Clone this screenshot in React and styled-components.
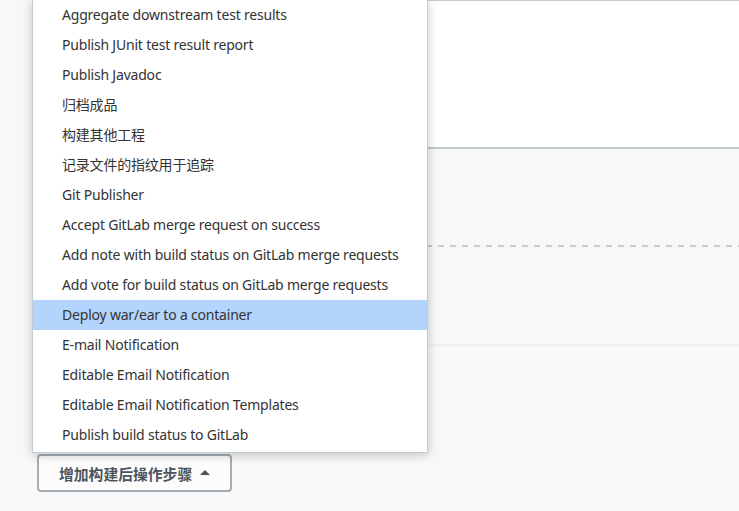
import React from 'react';
import styled, { createGlobalStyle } from 'styled-components';

const GlobalStyle = createGlobalStyle`
  html, body {
    margin: 0;
    padding: 0;
    background: #f8f8f8;
  }
  body {
    width: 739px;
    height: 511px;
    overflow: hidden;
    font-family: "Noto Sans", "Noto Sans CJK SC", sans-serif;
  }
  *{
    box-sizing: border-box;
  }
`;

const Page = styled.div`
  display: flex;
  flex-direction: column;
  width: 739px;
  height: 511px;
  background: #f8f8f8;
`;

const TopPanel = styled.div`
  height: 149px;
  margin-left: 40px;
  background: #fff;
  border-top: 1px solid #c3ccd1;
  border-bottom: 2px solid #c3ccd1;
`;

const Section = styled.div`
  display: flex;
  flex-direction: column;
  margin-left: 40px;
  padding-top: 96px;
`;

const DashedRule = styled.div`
  height: 2px;
  background-image: linear-gradient(to right, #c3ccd1 0 6px, transparent 6px 12px);
  background-size: 12px 2px;
  background-position: 2px 0;
`;

const FaintRule = styled.div`
  height: 2px;
  margin-top: 97px;
  background: #efefef;
`;

const Footer = styled.div`
  padding: 108px 0 0 37px;
`;

const DropWrap = styled.div`
  position: relative;
  display: inline-block;
`;

const AddButton = styled.button`
  display: flex;
  align-items: center;
  gap: 8px;
  height: 38px;
  padding: 0 20px 0 20px;
  border: 2px solid #a2adb5;
  border-radius: 4px;
  background: #fcfcfc;
  color: #4d545d;
  font-family: "Noto Sans", "Noto Sans CJK SC", sans-serif;
  font-size: 14.8px;
  font-weight: 600;
  cursor: pointer;
`;

const Caret = styled.span`
  width: 0;
  height: 0;
  border-left: 5px solid transparent;
  border-right: 5px solid transparent;
  border-bottom: 5px solid #4d545d;
  margin-top: -1px;
`;

const Menu = styled.ul`
  position: absolute;
  left: -5px;
  bottom: calc(100% + 1px);
  width: 396px;
  margin: 0;
  padding: 0 0 2px;
  list-style: none;
  background: #fff;
  border: 1px solid #c3ccd1;
  box-shadow: 0 2px 10px rgba(0, 0, 0, 0.22);
`;

const MenuItem = styled.li`
  height: 30px;
  line-height: 30px;
  padding-left: 29px;
  font-size: 14px;
  color: #333;
  white-space: nowrap;
  letter-spacing: -0.2px;
  background: ${props => props.selected ? '#b3d4fc' : 'transparent'};
`;

const items = [
  'Aggregate downstream test results',
  'Publish JUnit test result report',
  'Publish Javadoc',
  '归档成品',
  '构建其他工程',
  '记录文件的指纹用于追踪',
  'Git Publisher',
  'Accept GitLab merge request on success',
  'Add note with build status on GitLab merge requests',
  'Add vote for build status on GitLab merge requests',
  'Deploy war/ear to a container',
  'E-mail Notification',
  'Editable Email Notification',
  'Editable Email Notification Templates',
  'Publish build status to GitLab',
];

export default function App() {
  return (
    <Page>
      <GlobalStyle />
      <TopPanel />
      <Section>
        <DashedRule />
        <FaintRule />
      </Section>
      <Footer>
        <DropWrap>
          <Menu>
            {items.map(label => (
              <MenuItem key={label} selected={label === 'Deploy war/ear to a container'}>
                {label}
              </MenuItem>
            ))}
          </Menu>
          <AddButton>
            增加构建后操作步骤
            <Caret />
          </AddButton>
        </DropWrap>
      </Footer>
    </Page>
  );
}
